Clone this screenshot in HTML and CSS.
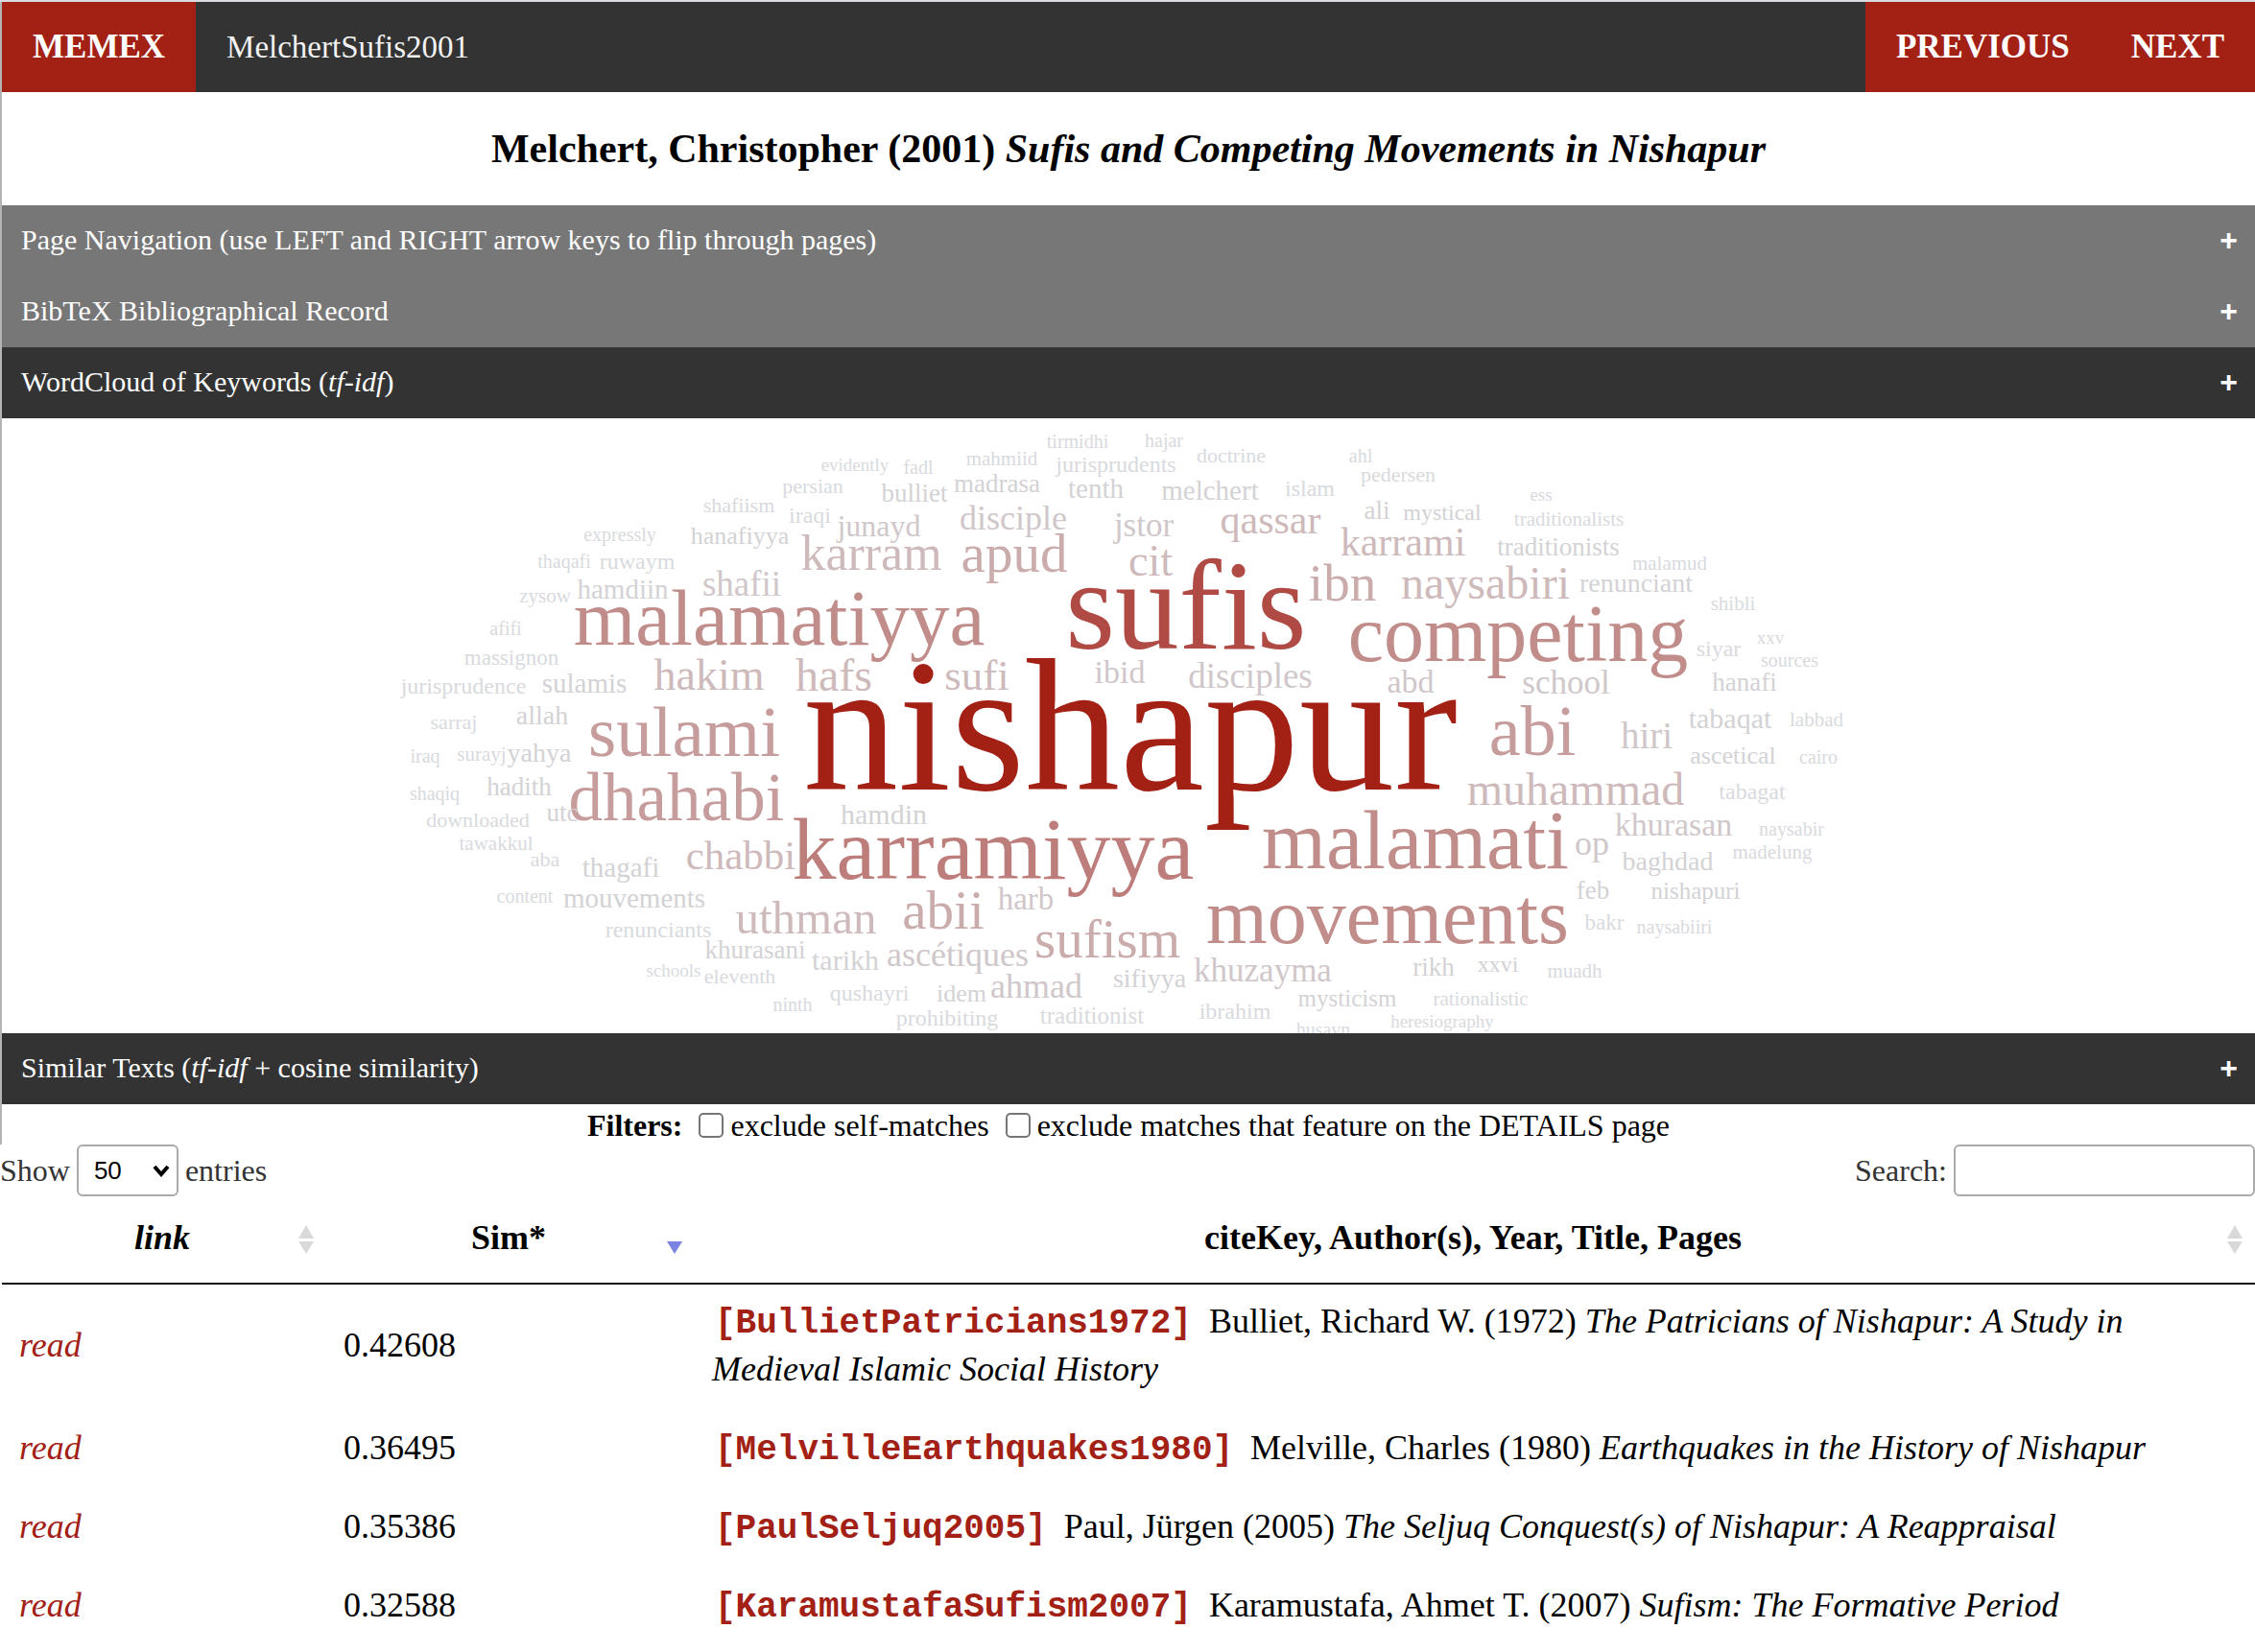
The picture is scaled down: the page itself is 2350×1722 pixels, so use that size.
FILE: index.html
```html
<!DOCTYPE html>
<html lang="en">
<head>
<meta charset="utf-8">
<meta name="viewport" content="width=device-width, initial-scale=1">
<title>MelchertSufis2001</title>
<link rel="stylesheet" href="styles.css">
</head>
<body>
<div class="reader">
  <nav class="topbar">
    <a class="topbar-link" href="#memex">MEMEX</a>
    <span class="topbar-key">MelchertSufis2001</span>
    <a class="topbar-link" href="#previous">PREVIOUS</a>
    <a class="topbar-link" href="#next">NEXT</a>
  </nav>
  <h1 class="title">Melchert, Christopher (2001) <em>Sufis and Competing Movements in Nishapur</em></h1>
  <button class="fold" type="button"><span>Page Navigation (use LEFT and RIGHT arrow keys to flip through pages)</span><span class="plus">+</span></button>
  <button class="fold" type="button"><span>BibTeX Bibliographical Record</span><span class="plus">+</span></button>
  <button class="fold fold-open" type="button"><span>WordCloud of Keywords (<em>tf-idf</em>)</span><span class="plus">+</span></button>
  <svg class="cloud" viewBox="2 435 2348 641" role="img" aria-label="Word cloud of keywords">
    <g class="w10"><text x="1178" y="822" font-size="198">nishapur</text></g>
    <g class="w9"><text x="1236" y="675" font-size="133">sufis</text></g>
    <g class="w8"><text x="1035" y="915" font-size="92">karramiyya</text></g>
    <g class="w7">
      <text x="812" y="671" font-size="83">malamatiyya</text>
      <text x="1582" y="688" font-size="84">competing</text>
      <text x="1475" y="904" font-size="86">malamati</text>
      <text x="1446" y="982" font-size="82">movements</text>
    </g>
    <g class="w6">
      <text x="713" y="787" font-size="75">sulami</text>
      <text x="1597" y="786" font-size="74">abi</text>
      <text x="705" y="854" font-size="71">dhahabi</text>
    </g>
    <g class="w5">
      <text x="1057" y="595" font-size="57">apud</text>
      <text x="1399" y="625" font-size="55">ibn</text>
      <text x="983" y="967" font-size="57">abii</text>
      <text x="1154" y="997" font-size="57">sufism</text>
    </g>
    <g class="w4">
      <text x="908" y="593" font-size="52">karram</text>
      <text x="739" y="718" font-size="46">hakim</text>
      <text x="869" y="719" font-size="48">hafs</text>
      <text x="1018" y="718" font-size="45">sufi</text>
      <text x="1199" y="599" font-size="46">cit</text>
      <text x="1548" y="623" font-size="48">naysabiri</text>
      <text x="840" y="972" font-size="49">uthman</text>
      <text x="1642" y="838" font-size="48">muhammad</text>
      <text x="1324" y="555" font-size="42">qassar</text>
      <text x="1462" y="578" font-size="42">karrami</text>
      <text x="772" y="905" font-size="43">chabbi</text>
    </g>
    <g class="w3">
      <text x="1056" y="551" font-size="36">disciple</text>
      <text x="773" y="620" font-size="37">shafii</text>
      <text x="916" y="558" font-size="32">junayd</text>
      <text x="1192" y="558" font-size="35">jstor</text>
      <text x="1167" y="711" font-size="34">ibid</text>
      <text x="1303" y="716" font-size="37">disciples</text>
      <text x="1470" y="721" font-size="34">abd</text>
      <text x="1632" y="722" font-size="35">school</text>
      <text x="1069" y="947" font-size="33">harb</text>
      <text x="998" y="1006" font-size="36">ascétiques</text>
      <text x="1080" y="1039" font-size="36">ahmad</text>
      <text x="1716" y="779" font-size="39">hiri</text>
      <text x="1659" y="890" font-size="36">op</text>
      <text x="1744" y="870" font-size="34">khurasan</text>
      <text x="1316" y="1022" font-size="35">khuzayma</text>
    </g>
    <g class="w2">
      <text x="953" y="522" font-size="27">bulliet</text>
      <text x="1039" y="512" font-size="27">madrasa</text>
      <text x="1142" y="518" font-size="29">tenth</text>
      <text x="771" y="566" font-size="26">hanafiyya</text>
      <text x="649" y="623" font-size="29">hamdiin</text>
      <text x="609" y="721" font-size="29">sulamis</text>
      <text x="565" y="754" font-size="28">allah</text>
      <text x="1261" y="520" font-size="29">melchert</text>
      <text x="1435" y="540" font-size="27">ali</text>
      <text x="1503" y="541" font-size="24">mystical</text>
      <text x="1624" y="578" font-size="27">traditionists</text>
      <text x="1705" y="616" font-size="28">renunciant</text>
      <text x="1818" y="719" font-size="27">hanafi</text>
      <text x="1803" y="758" font-size="30">tabaqat</text>
      <text x="562" y="793" font-size="28">yahya</text>
      <text x="541" y="828" font-size="27">hadith</text>
      <text x="586" y="855" font-size="27">utc</text>
      <text x="921" y="858" font-size="30">hamdin</text>
      <text x="647" y="913" font-size="29">thagafi</text>
      <text x="661" y="945" font-size="29">mouvements</text>
      <text x="787" y="998" font-size="27">khurasani</text>
      <text x="881" y="1010" font-size="30">tarikh</text>
      <text x="1198" y="1028" font-size="28">sifiyya</text>
      <text x="1002" y="1043" font-size="26">idem</text>
      <text x="1806" y="795" font-size="26">ascetical</text>
      <text x="1738" y="906" font-size="28">baghdad</text>
      <text x="1660" y="936" font-size="27">feb</text>
      <text x="1767" y="936" font-size="25">nishapuri</text>
      <text x="1494" y="1016" font-size="27">rikh</text>
      <text x="1561" y="1012" font-size="24">xxvi</text>
      <text x="1404" y="1048" font-size="25">mysticism</text>
    </g>
    <g class="w1">
      <text x="1123" y="466" font-size="20">tirmidhi</text>
      <text x="891" y="490" font-size="19">evidently</text>
      <text x="957" y="493" font-size="20">fadl</text>
      <text x="1044" y="484" font-size="21">mahmiid</text>
      <text x="1163" y="491" font-size="24">jurisprudents</text>
      <text x="847" y="513" font-size="22">persian</text>
      <text x="770" y="533" font-size="22">shafiism</text>
      <text x="844" y="544" font-size="24">iraqi</text>
      <text x="646" y="563" font-size="20">expressly</text>
      <text x="588" y="591" font-size="20">thaqafi</text>
      <text x="664" y="592" font-size="24">ruwaym</text>
      <text x="568" y="627" font-size="21">zysow</text>
      <text x="527" y="661" font-size="20">afifi</text>
      <text x="533" y="692" font-size="23">massignon</text>
      <text x="483" y="722" font-size="24">jurisprudence</text>
      <text x="473" y="759" font-size="22">sarraj</text>
      <text x="1213" y="465" font-size="20">hajar</text>
      <text x="1283" y="481" font-size="22">doctrine</text>
      <text x="1418" y="481" font-size="20">ahl</text>
      <text x="1457" y="501" font-size="22">pedersen</text>
      <text x="1365" y="516" font-size="24">islam</text>
      <text x="1606" y="521" font-size="19">ess</text>
      <text x="1635" y="547" font-size="21">traditionalists</text>
      <text x="1740" y="593" font-size="21">malamud</text>
      <text x="1806" y="635" font-size="21">shibli</text>
      <text x="1791" y="683" font-size="24">siyar</text>
      <text x="1845" y="670" font-size="19">xxv</text>
      <text x="1865" y="694" font-size="20">sources</text>
      <text x="1893" y="756" font-size="21">labbad</text>
      <text x="443" y="794" font-size="20">iraq</text>
      <text x="502" y="792" font-size="21">surayj</text>
      <text x="453" y="833" font-size="20">shaqiq</text>
      <text x="498" y="861" font-size="22">downloaded</text>
      <text x="517" y="885" font-size="21">tawakkul</text>
      <text x="568" y="902" font-size="22">aba</text>
      <text x="547" y="940" font-size="20">content</text>
      <text x="686" y="976" font-size="24">renunciants</text>
      <text x="702" y="1017" font-size="19">schools</text>
      <text x="771" y="1024" font-size="22">eleventh</text>
      <text x="826" y="1053" font-size="20">ninth</text>
      <text x="906" y="1042" font-size="24">qushayri</text>
      <text x="987" y="1068" font-size="24">prohibiting</text>
      <text x="1138" y="1066" font-size="25">traditionist</text>
      <text x="1895" y="795" font-size="20">cairo</text>
      <text x="1826" y="832" font-size="24">tabagat</text>
      <text x="1867" y="870" font-size="20">naysabir</text>
      <text x="1847" y="894" font-size="21">madelung</text>
      <text x="1672" y="968" font-size="23">bakr</text>
      <text x="1745" y="972" font-size="20">naysabiiri</text>
      <text x="1641" y="1018" font-size="21">muadh</text>
      <text x="1543" y="1047" font-size="21">rationalistic</text>
      <text x="1287" y="1061" font-size="24">ibrahim</text>
      <text x="1379" y="1079" font-size="20">husayn</text>
      <text x="1503" y="1070" font-size="19">heresiography</text>
    </g>
  </svg>
  <button class="fold fold-open" type="button"><span>Similar Texts (<em>tf-idf</em> + cosine similarity)</span><span class="plus">+</span></button>
  <div class="filters">
    <strong>Filters:</strong>
    <label class="check"><input type="checkbox">exclude self-matches</label>
    <label class="check"><input type="checkbox">exclude matches that feature on the DETAILS page</label>
  </div>
</div>
<div class="controls">
  <label class="length">Show
    <span class="picker"><select><option>10</option><option>25</option><option selected>50</option><option>100</option></select><svg class="chevron" viewBox="0 0 20 14" aria-hidden="true"><path d="M3 3l7 8 7-8"/></svg></span>
    entries</label>
  <label class="search">Search:<input type="search"></label>
</div>
<table class="matches">
  <colgroup><col class="col-link"><col class="col-sim"><col></colgroup>
  <thead>
    <tr>
      <th><em>link</em><svg class="sort" viewBox="0 0 16 30" aria-hidden="true"><path d="M0 14L8 0l8 14zM0 17h16L8 30z"/></svg></th>
      <th>Sim*<svg class="sort sort-active" viewBox="0 0 16 30" aria-hidden="true"><path d="M0 17h16L8 30z"/></svg></th>
      <th>citeKey, Author(s), Year, Title, Pages<svg class="sort" viewBox="0 0 16 30" aria-hidden="true"><path d="M0 14L8 0l8 14zM0 17h16L8 30z"/></svg></th>
    </tr>
  </thead>
  <tbody>
    <tr><td><a href="#BullietPatricians1972">read</a></td><td>0.42608</td><td><code>[BullietPatricians1972]</code>&nbsp; Bulliet, Richard W. (1972) <em>The Patricians of Nishapur: A Study in Medieval Islamic Social History</em></td></tr>
    <tr><td><a href="#MelvilleEarthquakes1980">read</a></td><td>0.36495</td><td><code>[MelvilleEarthquakes1980]</code>&nbsp; Melville, Charles (1980) <em>Earthquakes in the History of Nishapur</em></td></tr>
    <tr><td><a href="#PaulSeljuq2005">read</a></td><td>0.35386</td><td><code>[PaulSeljuq2005]</code>&nbsp; Paul, Jürgen (2005) <em>The Seljuq Conquest(s) of Nishapur: A Reappraisal</em></td></tr>
    <tr><td><a href="#KaramustafaSufism2007">read</a></td><td>0.32588</td><td><code>[KaramustafaSufism2007]</code>&nbsp; Karamustafa, Ahmet T. (2007) <em>Sufism: The Formative Period</em></td></tr>
  </tbody>
</table>
</body>
</html>
```
FILE: styles.css
```css
* { box-sizing: border-box; }

body {
  margin: 0;
  border-top: 2px solid #d9dbe0;
  background: #fff;
  color: #000;
  font-family: Baskerville, "Liberation Serif", serif;
  font-size: 32px;
}

.reader { border-left: 2px solid #b4b4b4; }

.topbar {
  display: flex;
  height: 94px;
  background: #333;
  color: #f2f2f2;
  line-height: 94px;
}
.topbar-link {
  padding: 0 32px;
  background: #a32015;
  color: #fff;
  font-size: 35px;
  font-weight: bold;
  text-decoration: none;
}
.topbar-key { flex: 1; padding: 0 32px; font-size: 33px; }

.title {
  margin: 0;
  padding: 34px 20px;
  font-size: 42px;
  line-height: 50px;
  text-align: center;
}

.fold {
  display: flex;
  justify-content: space-between;
  align-items: center;
  width: 100%;
  height: 74px;
  padding: 0 18px 2px 20px;
  border: 0;
  background: #777;
  color: #fff;
  font-family: inherit;
  font-size: 30px;
  text-align: left;
}
.fold-open { background: #333; }
.plus { font: bold 32px "Liberation Sans", Arial, sans-serif; }

.cloud { display: block; width: 100%; }
.cloud text { text-anchor: middle; font-family: Charter, "Liberation Serif", serif; }
.w1 { fill: #d8dade; }
.w2 { fill: #d3d2d5; }
.w3 { fill: #d0c7ca; }
.w4 { fill: #ceb9bb; }
.w5 { fill: #caacac; }
.w6 { fill: #c69c9c; }
.w7 { fill: #c18d8b; }
.w8 { fill: #bd7d7b; }
.w9 { fill: #b04a45; }
.w10 { fill: #a32015; }

.filters {
  display: flex;
  justify-content: center;
  align-items: center;
  gap: 17px;
  height: 42px;
  padding-top: 2px;
}
.check { display: flex; align-items: center; gap: 7px; }
.check input {
  appearance: none;
  width: 26px;
  height: 26px;
  margin: 0;
  border: 2px solid #767676;
  border-radius: 5px;
  background: #fff;
}

.controls {
  display: flex;
  justify-content: space-between;
  height: 54px;
  color: #333;
}
.length, .search { display: flex; align-items: center; gap: 7px; }
.picker { position: relative; display: flex; }
.picker select, .search input {
  appearance: none;
  height: 54px;
  border: 2px solid #aaa;
  border-radius: 6px;
  background: #fff;
  color: #000;
  font: 26px "Liberation Sans", Arial, sans-serif;
}
.picker select { width: 106px; padding: 0 16px; }
.search input { width: 314px; padding: 0 10px; }
.chevron {
  position: absolute;
  top: 20px;
  right: 8px;
  width: 20px;
  height: 14px;
  fill: none;
  stroke: #000;
  stroke-width: 4;
  pointer-events: none;
}

.matches {
  width: calc(100% - 2px);
  margin-left: 2px;
  border-collapse: separate;
  border-spacing: 0;
  table-layout: fixed;
  font-family: Charter, "Liberation Serif", serif;
  font-size: 36px;
  line-height: 50px;
}
.col-link { width: 14.4%; }
.col-sim { width: 16.35%; }
.matches th {
  position: relative;
  padding: 18px 22px 22px 18px;
  border-bottom: 2px solid #111;
}
.sort {
  position: absolute;
  right: 13px;
  bottom: 30px;
  width: 16px;
  height: 30px;
  fill: #d9d9d9;
}
.sort-active { fill: #7b84e0; }
.matches td { padding: 13px 18px 19px; vertical-align: middle; }
.matches td a { color: #a32015; font-style: italic; text-decoration: none; }
.matches code {
  padding-left: 3px;
  color: #a32015;
  font-family: "Liberation Mono", "Courier New", monospace;
  font-size: 36px;
  font-weight: bold;
  line-height: 1;
}
```
